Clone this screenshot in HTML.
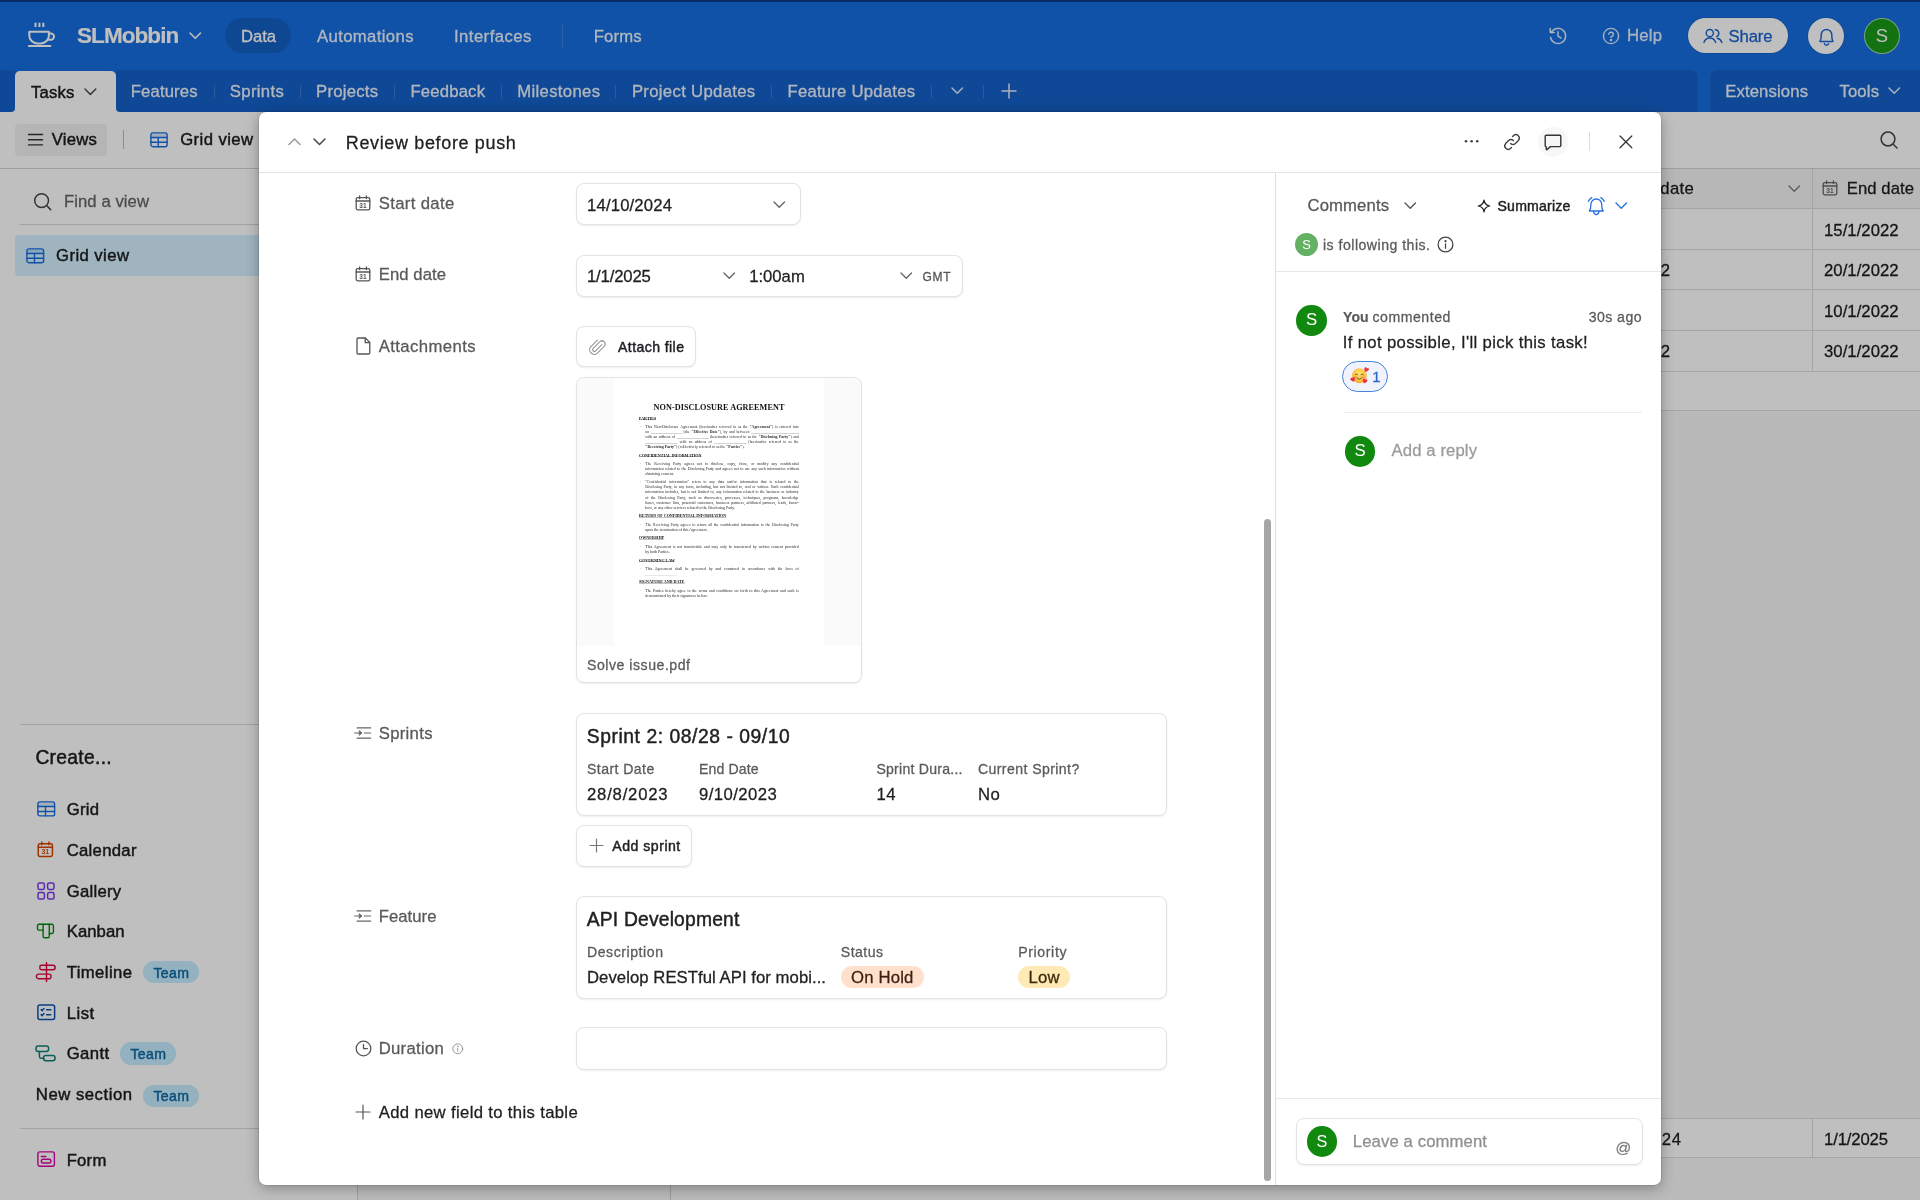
<!DOCTYPE html>
<html lang="en">
<head>
<meta charset="utf-8">
<title>SLMobbin - Tasks</title>
<style>
*{box-sizing:border-box;margin:0;padding:0}
html,body{width:1920px;height:1200px;overflow:hidden}
body{font-family:"Liberation Sans",sans-serif;background:#f7f7f7;color:#1d1f25;position:relative}
svg{display:block;overflow:visible}
.abs{position:absolute}
.layer{position:absolute;left:0;top:0;width:1920px;height:1200px;overflow:hidden;will-change:transform}
.t{position:absolute;white-space:nowrap;line-height:1}
.av{position:absolute;border-radius:50%;text-align:center}
.pt{position:absolute;font-family:"Liberation Serif",serif}
#dim{background:rgba(0,0,0,.25)}
#modalbg{position:absolute;left:259px;top:112px;width:1402px;height:1073px;background:#fff;border-radius:7px;box-shadow:0 0 0 .6px rgba(0,0,0,.16),0 3px 14px rgba(0,0,0,.3)}
</style>
</head>
<body>
<div class="layer" id="base">
<div class="abs" style="left:0px;top:0px;width:1920px;height:112px;background:#166ee1"></div>
<div class="abs" style="left:0px;top:0px;width:1920px;height:1.5px;background:#0d3a8a"></div>
<svg class="abs" style="left:27px;top:21px;" width="30" height="27" viewBox="0 0 30 27" fill="none" stroke="#fff" stroke-width="2" stroke-linecap="round" stroke-linejoin="round"><path d="M2.3 10.8H21.9V14.4A8 8 0 0 1 13.9 22.4H10.3A8 8 0 0 1 2.3 14.4Z"/><path d="M21.9 12.4H23.8A3.2 3.2 0 0 1 23.8 18.8H21.2"/><path d="M1.8 25H23.4"/><path d="M8.5 1.8V6M12.4 1.8V6M16.3 1.8V6" stroke-width="2" stroke-linecap="butt"/></svg>
<svg class="abs" style="left:188.55px;top:32.375px;" width="12.5" height="7.25" viewBox="0 0 12.5 7.25" fill="none" stroke="#fff" stroke-width="1.6" stroke-linecap="round" stroke-linejoin="round"><polyline points="1,1 6.25,6.25 11.5,1"/></svg>
<div class="abs" style="left:225.4px;top:18px;width:65.6px;height:35px;background:rgba(0,0,0,.13);border-radius:18px"></div>
<div class="abs" style="left:562px;top:24px;width:1px;height:23.5px;background:rgba(255,255,255,.14)"></div>
<svg class="abs" style="left:1548px;top:26px;" width="20" height="20" viewBox="0 0 20 20" fill="none" stroke="rgba(255,255,255,.86)" stroke-width="1.5" stroke-linecap="round" stroke-linejoin="round"><path d="M3.4 6.2A7.6 7.6 0 1 1 2.6 11.6"/><path d="M2.2 2.6V6.6H6.2"/><path d="M10 5.8V10.2L13 12"/></svg>
<svg class="abs" style="left:1602px;top:27px;" width="18" height="18" viewBox="0 0 18 18" fill="none" stroke="rgba(255,255,255,.86)" stroke-width="1.4" stroke-linecap="round" stroke-linejoin="round"><circle cx="9" cy="9" r="7.6"/><path d="M6.9 7.2A2.2 2.2 0 1 1 9 9.6V10.6"/><circle cx="9" cy="13.1" r="0.55" fill="#fff"/></svg>
<div class="abs" style="left:1688px;top:18px;width:100px;height:35px;background:#fff;border-radius:18px;box-shadow:0 0 0 1px rgba(0,0,0,.1)"></div>
<svg class="abs" style="left:1702.5px;top:26.7px;" width="20.2" height="17.5" viewBox="0 0 22 19" fill="none" stroke="#1b63cf" stroke-width="1.55" stroke-linecap="round" stroke-linejoin="round"><circle cx="7.4" cy="6.6" r="3.9"/><path d="M1 16.8C2.2 13.4 4.6 12 7.4 12S12.6 13.4 13.8 16.8"/><path d="M13.4 2.9A3.9 3.9 0 0 1 14.8 10.4"/><path d="M15.6 12.2C17.8 12.6 19.6 14 20.6 16.8"/></svg>
<div class="abs" style="left:1808px;top:18px;width:36px;height:36px;background:#fff;border-radius:50%;box-shadow:0 0 0 1px rgba(0,0,0,.1)"></div>
<svg class="abs" style="left:1816.5px;top:26px;" width="19" height="21" viewBox="0 0 19 21" fill="none" stroke="#1b63cf" stroke-width="1.5" stroke-linecap="round" stroke-linejoin="round"><path d="M3 15.4C4.4 13.4 4.2 11.4 4.2 8.8A5.3 5.3 0 0 1 14.8 8.8C14.8 11.4 14.6 13.4 16 15.4Z"/><path d="M7.4 17.6A2.2 2.2 0 0 0 11.6 17.6"/></svg>
<div class="av" style="left:1864.0px;top:18.0px;width:36px;height:36px;line-height:36px;font-size:18.5px;background:#1a9a1a;color:#fff;border:1.5px solid rgba(255,255,255,.6);line-height:33px;">S</div>
<div class="abs" style="left:8px;top:104px;width:116px;height:8px;background:#fff"></div>
<div class="abs" style="left:0px;top:70px;width:15px;height:42px;background:#1461c9;border-radius:0 0 4px 0"></div>
<div class="abs" style="left:116px;top:70px;width:1582px;height:42px;background:#1461c9;border-radius:0 7px 0 4px"></div>
<div class="abs" style="left:1710px;top:70px;width:210px;height:42px;background:#1461c9;border-radius:7px 0 0 0"></div>
<div class="abs" style="left:15px;top:71px;width:101px;height:41px;background:#fff;border-radius:5px 5px 0 0"></div>
<svg class="abs" style="left:83.89999999999999px;top:87.8px;" width="12.8" height="7.4" viewBox="0 0 12.8 7.4" fill="none" stroke="#444" stroke-width="1.4" stroke-linecap="round" stroke-linejoin="round"><polyline points="1,1 6.4,6.4 11.8,1"/></svg>
<div class="abs" style="left:213.5px;top:84.5px;width:1px;height:13.5px;background:rgba(255,255,255,.17)"></div>
<div class="abs" style="left:299.5px;top:84.5px;width:1px;height:13.5px;background:rgba(255,255,255,.17)"></div>
<div class="abs" style="left:393.9px;top:84.5px;width:1px;height:13.5px;background:rgba(255,255,255,.17)"></div>
<div class="abs" style="left:501.2px;top:84.5px;width:1px;height:13.5px;background:rgba(255,255,255,.17)"></div>
<div class="abs" style="left:615.1px;top:84.5px;width:1px;height:13.5px;background:rgba(255,255,255,.17)"></div>
<div class="abs" style="left:771.0px;top:84.5px;width:1px;height:13.5px;background:rgba(255,255,255,.17)"></div>
<div class="abs" style="left:930.5px;top:84.5px;width:1px;height:13.5px;background:rgba(255,255,255,.17)"></div>
<div class="abs" style="left:983.0px;top:84.5px;width:1px;height:13.5px;background:rgba(255,255,255,.17)"></div>
<svg class="abs" style="left:950.75px;top:87.375px;" width="12.5" height="7.25" viewBox="0 0 12.5 7.25" fill="none" stroke="#e4ecfa" stroke-width="1.5" stroke-linecap="round" stroke-linejoin="round"><polyline points="1,1 6.25,6.25 11.5,1"/></svg>
<svg class="abs" style="left:1001.0px;top:83.0px;" width="16" height="16" viewBox="0 0 16 16" fill="none" stroke="#e4ecfa" stroke-width="1.5" stroke-linecap="round" stroke-linejoin="round"><path d="M1 8.0H15M8.0 1V15"/></svg>
<svg class="abs" style="left:1888.15px;top:87.375px;" width="12.5" height="7.25" viewBox="0 0 12.5 7.25" fill="none" stroke="#e4ecfa" stroke-width="1.5" stroke-linecap="round" stroke-linejoin="round"><polyline points="1,1 6.25,6.25 11.5,1"/></svg>
<div class="abs" style="left:0px;top:112px;width:1920px;height:56px;background:#fff"></div>
<div class="abs" style="left:0px;top:167.5px;width:1920px;height:1.2px;background:#d3d3d3"></div>
<div class="abs" style="left:15px;top:123.5px;width:92px;height:32px;background:#f2f2f2;border-radius:4px"></div>
<svg class="abs" style="left:27px;top:132px;" width="18" height="16" viewBox="0 0 18 16" fill="none" stroke="#333" stroke-width="1.4" stroke-linecap="round" stroke-linejoin="round"><path d="M1.5 2.5H15.5M1.5 7.7H15.5M1.5 12.9H15.5"/></svg>
<div class="abs" style="left:123px;top:130px;width:1px;height:19px;background:#bdbdbd"></div>
<svg class="abs" style="left:150.4px;top:131.8px;" width="18" height="15.6" viewBox="0 0 18 15.6" fill="none" stroke="#166ee1" stroke-width="1.4" stroke-linecap="round" stroke-linejoin="round"><rect x="0.9" y="0.9" width="16.2" height="13.799999999999999" rx="2"/><path d="M0.9 5.46H17.1M0.9 10.296H17.1M8.280000000000001 5.46V14.7"/><rect x="1.6" y="1.6" width="14.8" height="3.86" fill="#166ee1" fill-opacity=".16" stroke="none"/></svg>
<svg class="abs" style="left:1879px;top:130px;" width="20" height="20" viewBox="0 0 20 20" fill="none" stroke="#444" stroke-width="1.5" stroke-linecap="round" stroke-linejoin="round"><circle cx="9" cy="9" r="6.9"/><path d="M14.2 14.2L18 18"/></svg>
<div class="abs" style="left:0px;top:169px;width:357px;height:1031px;background:#fff"></div>
<div class="abs" style="left:357px;top:169px;width:1px;height:1031px;background:#d4d4d4"></div>
<svg class="abs" style="left:33px;top:192px;" width="20" height="20" viewBox="0 0 20 20" fill="none" stroke="#444" stroke-width="1.5" stroke-linecap="round" stroke-linejoin="round"><circle cx="8.6" cy="8.6" r="6.9"/><path d="M13.8 13.8L17.6 17.6"/></svg>
<div class="abs" style="left:20px;top:224px;width:320px;height:1.2px;background:#d9d9d9"></div>
<div class="abs" style="left:15px;top:235.3px;width:330px;height:40.6px;background:#d5f1ff;border-radius:4px"></div>
<svg class="abs" style="left:26px;top:247.8px;" width="18.5" height="15.6" viewBox="0 0 18.5 15.6" fill="none" stroke="#166ee1" stroke-width="1.4" stroke-linecap="round" stroke-linejoin="round"><rect x="0.9" y="0.9" width="16.7" height="13.799999999999999" rx="2"/><path d="M0.9 5.46H17.6M0.9 10.296H17.6M8.51 5.46V14.7"/><rect x="1.6" y="1.6" width="15.3" height="3.86" fill="#166ee1" fill-opacity=".16" stroke="none"/></svg>
<div class="abs" style="left:20px;top:723.6px;width:320px;height:1.2px;background:#dadada"></div>
<div class="abs" style="left:143px;top:960.9px;width:56px;height:22.5px;background:#c4ecff;border-radius:12px"></div>
<div class="abs" style="left:120px;top:1042.3px;width:56px;height:22.5px;background:#c4ecff;border-radius:12px"></div>
<div class="abs" style="left:143px;top:1084.5px;width:56px;height:22.5px;background:#c4ecff;border-radius:12px"></div>
<div class="abs" style="left:20px;top:1127.6px;width:320px;height:1.2px;background:#dadada"></div>
<svg class="abs" style="left:36.5px;top:801px;" width="18.5" height="15.8" viewBox="0 0 18.5 15.8" fill="none" stroke="#166ee1" stroke-width="1.4" stroke-linecap="round" stroke-linejoin="round"><rect x="0.9" y="0.9" width="16.7" height="14.0" rx="2"/><path d="M0.9 5.53H17.6M0.9 10.428H17.6M8.51 5.53V14.9"/><rect x="1.6" y="1.6" width="15.3" height="3.93" fill="#166ee1" fill-opacity=".16" stroke="none"/></svg>
<svg class="abs" style="left:37px;top:840.5px;" width="16.7" height="16.7" viewBox="0 0 16 16" fill="none" stroke="#d54401" stroke-width="1.437125748502994" stroke-linecap="round" stroke-linejoin="round"><rect x="1.2" y="2.6" width="13.6" height="12.2" rx="1.6"/><path d="M1.2 6H14.8M4.6 0.9V3.6M11.4 0.9V3.6"/><text x="8" y="12.9" font-family='"Liberation Sans",sans-serif' font-size="6.6" font-weight="700" text-anchor="middle" fill="#d54401" stroke="none">31</text></svg>
<svg class="abs" style="left:36.5px;top:881.5px;" width="18" height="18" viewBox="0 0 18 18" fill="none" stroke="#7c37ef" stroke-width="1.5" stroke-linecap="round" stroke-linejoin="round"><rect x="1" y="1" width="6.4" height="6.4" rx="1.6"/><rect x="10.6" y="1" width="6.4" height="6.4" rx="1.6"/><rect x="1" y="10.6" width="6.4" height="6.4" rx="1.6"/><rect x="10.6" y="10.6" width="6.4" height="6.4" rx="1.6"/></svg>
<svg class="abs" style="left:36px;top:922.5px;" width="19" height="17" viewBox="0 0 19 17" fill="none" stroke="#048a0e" stroke-width="1.4" stroke-linecap="round" stroke-linejoin="round"><path d="M3 1.3H15.9A1.5 1.5 0 0 1 17.4 2.8V9A1.5 1.5 0 0 1 15.9 10.5H13.3V13.3A1.5 1.5 0 0 1 11.8 14.8H8.6A1.5 1.5 0 0 1 7.1 13.3V7.1H3A1.5 1.5 0 0 1 1.5 5.6V2.8A1.5 1.5 0 0 1 3 1.3Z"/><path d="M7.1 1.3V7.1M13.3 1.3V10.5"/></svg>
<svg class="abs" style="left:35px;top:961.5px;" width="21" height="21" viewBox="0 0 21 21" fill="none" stroke="#dc043b" stroke-width="1.4" stroke-linecap="round" stroke-linejoin="round"><path d="M11.5 0.6V19.6"/><path d="M6.3 3.3H18A2.2 2.2 0 0 1 18 7.7H6.3A1.4 1.4 0 0 1 4.9 6.3V4.7A1.4 1.4 0 0 1 6.3 3.3Z"/><path d="M3.7 12.1H14.5A1.4 1.4 0 0 1 15.9 13.5V15.3A1.4 1.4 0 0 1 14.5 16.7H3.7A2.3 2.3 0 0 1 3.7 12.1Z"/></svg>
<svg class="abs" style="left:36.5px;top:1003.8px;" width="18.5" height="16.5" viewBox="0 0 18.5 16.5" fill="none" stroke="#0d52ac" stroke-width="1.5" stroke-linecap="round" stroke-linejoin="round"><rect x="0.9" y="0.9" width="16.7" height="14.7" rx="2"/><path d="M4.2 5.6L5.2 6.6L7 4.6M4.2 10.6L5.2 11.6L7 9.6M9.6 5.8H13.8M9.6 10.8H13.8"/></svg>
<svg class="abs" style="left:35px;top:1045px;" width="21" height="17" viewBox="0 0 21 17" fill="none" stroke="#0d7f78" stroke-width="1.5" stroke-linecap="round" stroke-linejoin="round"><rect x="1" y="1" width="12.6" height="5.4" rx="2.2"/><rect x="8.6" y="10.4" width="11.4" height="5.4" rx="2.2"/><path d="M4.4 6.4V11.6A1.6 1.6 0 0 0 6 13.2H8.6"/></svg>
<svg class="abs" style="left:36.5px;top:1151.3px;" width="18.5" height="16.5" viewBox="0 0 18.5 16.5" fill="none" stroke="#dd04a8" stroke-width="1.4" stroke-linecap="round" stroke-linejoin="round"><rect x="0.9" y="0.9" width="16.5" height="14.4" rx="2"/><path d="M4.3 5.5H8.8"/><rect x="4.3" y="8.3" width="9.6" height="3.7" rx="1.8"/></svg>
<div class="abs" style="left:358px;top:169px;width:1562px;height:1031px;background:#f7f7f7"></div>
<div class="abs" style="left:358px;top:169px;width:1562px;height:39.5px;background:#f5f5f5"></div>
<div class="abs" style="left:358px;top:208.5px;width:1562px;height:162.5px;background:#ffffff"></div>
<div class="abs" style="left:358px;top:371px;width:1562px;height:39.5px;background:#ffffff"></div>
<div class="abs" style="left:358px;top:208.2px;width:1562px;height:1.2px;background:#dddddd"></div>
<div class="abs" style="left:358px;top:248.8px;width:1562px;height:1.2px;background:#dddddd"></div>
<div class="abs" style="left:358px;top:289.3px;width:1562px;height:1.2px;background:#dddddd"></div>
<div class="abs" style="left:358px;top:329.9px;width:1562px;height:1.2px;background:#dddddd"></div>
<div class="abs" style="left:358px;top:370.5px;width:1562px;height:1.2px;background:#dddddd"></div>
<div class="abs" style="left:358px;top:409.8px;width:1562px;height:1.3px;background:#dcdcdc"></div>
<div class="abs" style="left:1812px;top:169px;width:1px;height:202px;background:#dcdcdc"></div>
<div class="abs" style="left:670px;top:169px;width:1px;height:1031px;background:#d0d0d0"></div>
<svg class="abs" style="left:1787.75px;top:184.975px;" width="12.5" height="7.25" viewBox="0 0 12.5 7.25" fill="none" stroke="#777" stroke-width="1.3" stroke-linecap="round" stroke-linejoin="round"><polyline points="1,1 6.25,6.25 11.5,1"/></svg>
<svg class="abs" style="left:1821.5px;top:180px;" width="16" height="16" viewBox="0 0 16 16" fill="none" stroke="#666" stroke-width="1.3" stroke-linecap="round" stroke-linejoin="round"><rect x="1.2" y="2.6" width="13.6" height="12.2" rx="1.6"/><path d="M1.2 6H14.8M4.6 0.9V3.6M11.4 0.9V3.6"/><text x="8" y="12.9" font-family='"Liberation Sans",sans-serif' font-size="6.6" font-weight="700" text-anchor="middle" fill="#666" stroke="none">31</text></svg>
<div class="abs" style="left:358px;top:1118.6px;width:1562px;height:39px;background:#ffffff"></div>
<div class="abs" style="left:358px;top:1158px;width:1562px;height:42px;background:#f9f9f9"></div>
<div class="abs" style="left:358px;top:1117.6px;width:1562px;height:1.4px;background:#dcdcdc"></div>
<div class="abs" style="left:358px;top:1156.8px;width:1562px;height:1.4px;background:#dcdcdc"></div>
<div class="abs" style="left:1812px;top:1119px;width:1px;height:38.5px;background:#dcdcdc"></div>
<div class="abs" style="left:670px;top:1158px;width:1px;height:42px;background:#d0d0d0"></div>
<div class="t" style="left:77.00px;top:24.85px;font-size:22.5px;color:#fff;font-weight:700;-webkit-text-stroke:0.15px;letter-spacing:-0.933px;">SLMobbin</div>
<div class="t" style="left:241.00px;top:28.56px;font-size:16.7px;color:#fff;-webkit-text-stroke:0.28px;letter-spacing:-0.083px;">Data</div>
<div class="t" style="left:317.00px;top:28.56px;font-size:16.7px;color:rgba(255,255,255,.9);-webkit-text-stroke:0.28px;letter-spacing:0.373px;">Automations</div>
<div class="t" style="left:454.00px;top:28.56px;font-size:16.7px;color:rgba(255,255,255,.9);-webkit-text-stroke:0.28px;letter-spacing:0.447px;">Interfaces</div>
<div class="t" style="left:593.75px;top:28.56px;font-size:16.7px;color:rgba(255,255,255,.9);-webkit-text-stroke:0.28px;letter-spacing:0.167px;">Forms</div>
<div class="t" style="left:1627.00px;top:28.36px;font-size:16.7px;color:rgba(255,255,255,.86);-webkit-text-stroke:0.28px;letter-spacing:0.224px;">Help</div>
<div class="t" style="left:1728.50px;top:28.56px;font-size:16.7px;color:#1b63cf;-webkit-text-stroke:0.28px;letter-spacing:-0.133px;">Share</div>
<div class="t" style="left:31.00px;top:84.56px;font-size:16.7px;color:#1b1c1f;-webkit-text-stroke:0.45px;letter-spacing:0.186px;">Tasks</div>
<div class="t" style="left:130.80px;top:83.96px;font-size:16.7px;color:#edf3fc;-webkit-text-stroke:0.28px;letter-spacing:0.120px;">Features</div>
<div class="t" style="left:229.80px;top:83.96px;font-size:16.7px;color:#edf3fc;-webkit-text-stroke:0.28px;letter-spacing:0.335px;">Sprints</div>
<div class="t" style="left:316.00px;top:83.96px;font-size:16.7px;color:#edf3fc;-webkit-text-stroke:0.28px;letter-spacing:0.246px;">Projects</div>
<div class="t" style="left:410.40px;top:83.96px;font-size:16.7px;color:#edf3fc;-webkit-text-stroke:0.28px;letter-spacing:0.186px;">Feedback</div>
<div class="t" style="left:517.30px;top:83.96px;font-size:16.7px;color:#edf3fc;-webkit-text-stroke:0.28px;letter-spacing:0.326px;">Milestones</div>
<div class="t" style="left:631.90px;top:83.96px;font-size:16.7px;color:#edf3fc;-webkit-text-stroke:0.28px;letter-spacing:0.326px;">Project Updates</div>
<div class="t" style="left:787.50px;top:83.96px;font-size:16.7px;color:#edf3fc;-webkit-text-stroke:0.28px;letter-spacing:0.228px;">Feature Updates</div>
<div class="t" style="left:1725.20px;top:83.96px;font-size:16.7px;color:#edf3fc;-webkit-text-stroke:0.28px;letter-spacing:0.129px;">Extensions</div>
<div class="t" style="left:1839.40px;top:83.96px;font-size:16.7px;color:#edf3fc;-webkit-text-stroke:0.28px;letter-spacing:0.158px;">Tools</div>
<div class="t" style="left:51.70px;top:132.36px;font-size:16.7px;color:#1b1c1f;-webkit-text-stroke:0.45px;letter-spacing:0.245px;">Views</div>
<div class="t" style="left:180.20px;top:132.36px;font-size:16.7px;color:#1b1c1f;-webkit-text-stroke:0.45px;letter-spacing:0.407px;">Grid view</div>
<div class="t" style="left:64.00px;top:193.86px;font-size:16.7px;color:#666666;-webkit-text-stroke:0.28px;letter-spacing:0.059px;">Find a view</div>
<div class="t" style="left:56.00px;top:247.96px;font-size:16.7px;color:#1b1c1f;-webkit-text-stroke:0.45px;letter-spacing:0.432px;">Grid view</div>
<div class="t" style="left:35.40px;top:747.76px;font-size:19.3px;color:#1b1c1f;-webkit-text-stroke:0.45px;letter-spacing:0.293px;">Create...</div>
<div class="t" style="left:66.70px;top:802.16px;font-size:16.7px;color:#1b1c1f;-webkit-text-stroke:0.45px;letter-spacing:0.256px;">Grid</div>
<div class="t" style="left:66.70px;top:842.96px;font-size:16.7px;color:#1b1c1f;-webkit-text-stroke:0.45px;letter-spacing:0.295px;">Calendar</div>
<div class="t" style="left:66.70px;top:883.66px;font-size:16.7px;color:#1b1c1f;-webkit-text-stroke:0.45px;letter-spacing:0.273px;">Gallery</div>
<div class="t" style="left:66.70px;top:924.36px;font-size:16.7px;color:#1b1c1f;-webkit-text-stroke:0.45px;letter-spacing:0.071px;">Kanban</div>
<div class="t" style="left:66.70px;top:965.06px;font-size:16.7px;color:#1b1c1f;-webkit-text-stroke:0.45px;letter-spacing:0.407px;">Timeline</div>
<div class="t" style="left:153.40px;top:965.66px;font-size:14.1px;color:#0f68a2;-webkit-text-stroke:0.45px;letter-spacing:0.377px;">Team</div>
<div class="t" style="left:66.70px;top:1005.76px;font-size:16.7px;color:#1b1c1f;-webkit-text-stroke:0.45px;letter-spacing:0.510px;">List</div>
<div class="t" style="left:66.70px;top:1046.46px;font-size:16.7px;color:#1b1c1f;-webkit-text-stroke:0.45px;letter-spacing:0.418px;">Gantt</div>
<div class="t" style="left:130.40px;top:1047.06px;font-size:14.1px;color:#0f68a2;-webkit-text-stroke:0.45px;letter-spacing:0.377px;">Team</div>
<div class="t" style="left:66.70px;top:1153.16px;font-size:16.7px;color:#1b1c1f;-webkit-text-stroke:0.45px;letter-spacing:0.221px;">Form</div>
<div class="t" style="left:35.80px;top:1086.56px;font-size:16.7px;color:#1b1c1f;-webkit-text-stroke:0.45px;letter-spacing:0.529px;">New section</div>
<div class="t" style="left:153.40px;top:1089.16px;font-size:14.1px;color:#0f68a2;-webkit-text-stroke:0.45px;letter-spacing:0.377px;">Team</div>
<div class="t" style="left:1618.30px;top:181.46px;font-size:16.7px;color:#1b1c1f;-webkit-text-stroke:0.28px;letter-spacing:0.349px;">Start date</div>
<div class="t" style="left:1846.80px;top:181.46px;font-size:16.7px;color:#1b1c1f;-webkit-text-stroke:0.28px;letter-spacing:0.055px;">End date</div>
<div class="t" style="left:1824.00px;top:222.66px;font-size:16.7px;color:#1b1c1f;-webkit-text-stroke:0.28px;letter-spacing:0.044px;">15/1/2022</div>
<div class="t" style="left:1824.00px;top:263.26px;font-size:16.7px;color:#1b1c1f;-webkit-text-stroke:0.28px;letter-spacing:0.044px;">20/1/2022</div>
<div class="t" style="left:1824.00px;top:303.86px;font-size:16.7px;color:#1b1c1f;-webkit-text-stroke:0.28px;letter-spacing:0.044px;">10/1/2022</div>
<div class="t" style="left:1824.00px;top:344.46px;font-size:16.7px;color:#1b1c1f;-webkit-text-stroke:0.28px;letter-spacing:0.044px;">30/1/2022</div>
<div class="t" style="left:1660.80px;top:263.26px;font-size:16.7px;color:#1b1c1f;-webkit-text-stroke:0.28px;letter-spacing:0.585px;">2</div>
<div class="t" style="left:1660.80px;top:344.46px;font-size:16.7px;color:#1b1c1f;-webkit-text-stroke:0.28px;letter-spacing:0.585px;">2</div>
<div class="t" style="left:1592.00px;top:1132.06px;font-size:16.7px;color:#1b1c1f;-webkit-text-stroke:0.28px;letter-spacing:0.600px;">14/10/2024</div>
<div class="t" style="left:1824.00px;top:1132.06px;font-size:16.7px;color:#1b1c1f;-webkit-text-stroke:0.28px;letter-spacing:-0.138px;">1/1/2025</div>
</div>
<div class="layer" id="dim"></div>
<div class="layer" id="modal">
<div id="modalbg"></div>
<svg class="abs" style="left:287.9px;top:137.85px;" width="13" height="7.5" viewBox="0 0 13 7.5" fill="none" stroke="#9a9a9a" stroke-width="1.5" stroke-linecap="round" stroke-linejoin="round"><polyline points="1,6.5 6.5,1 12,6.5"/></svg>
<svg class="abs" style="left:313.3px;top:138.15px;" width="13" height="7.5" viewBox="0 0 13 7.5" fill="none" stroke="#444" stroke-width="1.5" stroke-linecap="round" stroke-linejoin="round"><polyline points="1,1 6.5,6.5 12,1"/></svg>
<svg class="abs" style="left:1464.3px;top:138.6px;" width="16" height="5" viewBox="0 0 16 5" fill="#444" stroke="none" stroke-width="1.5" stroke-linecap="round" stroke-linejoin="round"><circle cx="2" cy="2.3" r="1.3"/><circle cx="7.6" cy="2.3" r="1.3"/><circle cx="13.2" cy="2.3" r="1.3"/></svg>
<svg class="abs" style="left:1503px;top:132.5px;" width="18" height="18" viewBox="0 0 18 18" fill="none" stroke="#444" stroke-width="1.4" stroke-linecap="round" stroke-linejoin="round"><path d="M7.6 10.4A3.4 3.4 0 0 0 12.4 10.4L15.4 7.4A3.4 3.4 0 0 0 10.6 2.6L9.6 3.6"/><path d="M10.4 7.6A3.4 3.4 0 0 0 5.6 7.6L2.6 10.6A3.4 3.4 0 0 0 7.4 15.4L8.4 14.4"/></svg>
<div class="abs" style="left:1538px;top:127px;width:30px;height:30px;background:#f7f7f7;border-radius:50%"></div>
<svg class="abs" style="left:1544px;top:134px;" width="18" height="17" viewBox="0 0 18 17" fill="none" stroke="#333" stroke-width="1.4" stroke-linecap="round" stroke-linejoin="round"><path d="M2.2 1.2H15.8A1 1 0 0 1 16.8 2.2V11.6A1 1 0 0 1 15.8 12.6H6.4L2.9 15.6A0.4 0.4 0 0 1 2.2 15.3V12.6A1 1 0 0 1 1.2 11.6V2.2A1 1 0 0 1 2.2 1.2Z"/></svg>
<div class="abs" style="left:1589px;top:132px;width:1px;height:18.5px;background:#dcdcdc"></div>
<svg class="abs" style="left:1618.6px;top:134.6px;" width="14" height="14" viewBox="0 0 14 14" fill="none" stroke="#333" stroke-width="1.25" stroke-linecap="round" stroke-linejoin="round"><path d="M1 1L12.8 12.8M12.8 1L1 12.8"/></svg>
<div class="abs" style="left:259px;top:171.5px;width:1402px;height:1.3px;background:#e3e3e3"></div>
<div class="abs" style="left:1275px;top:172px;width:1.2px;height:1013px;background:#dedede"></div>
<div class="abs" style="left:1264px;top:519px;width:7px;height:661.5px;background:#a6a6a6;border-radius:4px"></div>
<svg class="abs" style="left:355px;top:195px;" width="16" height="16" viewBox="0 0 16 16" fill="none" stroke="#555" stroke-width="1.3" stroke-linecap="round" stroke-linejoin="round"><rect x="1.2" y="2.6" width="13.6" height="12.2" rx="1.6"/><path d="M1.2 6H14.8M4.6 0.9V3.6M11.4 0.9V3.6"/><text x="8" y="12.9" font-family='"Liberation Sans",sans-serif' font-size="6.6" font-weight="700" text-anchor="middle" fill="#555" stroke="none">31</text></svg>
<div class="abs" style="left:575.7px;top:183.3px;width:225.2px;height:42.2px;background:#fff;border:1.5px solid #e3e3e3;border-radius:8px;box-shadow:0 1px 2px rgba(0,0,0,.07);"></div>
<svg class="abs" style="left:773.15px;top:200.975px;" width="12.5" height="7.25" viewBox="0 0 12.5 7.25" fill="none" stroke="#666" stroke-width="1.4" stroke-linecap="round" stroke-linejoin="round"><polyline points="1,1 6.25,6.25 11.5,1"/></svg>
<svg class="abs" style="left:355px;top:266px;" width="16" height="16" viewBox="0 0 16 16" fill="none" stroke="#555" stroke-width="1.3" stroke-linecap="round" stroke-linejoin="round"><rect x="1.2" y="2.6" width="13.6" height="12.2" rx="1.6"/><path d="M1.2 6H14.8M4.6 0.9V3.6M11.4 0.9V3.6"/><text x="8" y="12.9" font-family='"Liberation Sans",sans-serif' font-size="6.6" font-weight="700" text-anchor="middle" fill="#555" stroke="none">31</text></svg>
<div class="abs" style="left:575.7px;top:254.5px;width:387.3px;height:42.1px;background:#fff;border:1.5px solid #e3e3e3;border-radius:8px;box-shadow:0 1px 2px rgba(0,0,0,.07);"></div>
<svg class="abs" style="left:722.55px;top:272.075px;" width="12.5" height="7.25" viewBox="0 0 12.5 7.25" fill="none" stroke="#666" stroke-width="1.4" stroke-linecap="round" stroke-linejoin="round"><polyline points="1,1 6.25,6.25 11.5,1"/></svg>
<svg class="abs" style="left:900.25px;top:272.075px;" width="12.5" height="7.25" viewBox="0 0 12.5 7.25" fill="none" stroke="#666" stroke-width="1.4" stroke-linecap="round" stroke-linejoin="round"><polyline points="1,1 6.25,6.25 11.5,1"/></svg>
<svg class="abs" style="left:355.5px;top:337px;" width="15" height="18" viewBox="0 0 15 18" fill="none" stroke="#555" stroke-width="1.3" stroke-linecap="round" stroke-linejoin="round"><path d="M2.2 1H9.4L13.8 5.4V15.8A1.2 1.2 0 0 1 12.6 17H2.2A1.2 1.2 0 0 1 1 15.8V2.2A1.2 1.2 0 0 1 2.2 1Z"/><path d="M9.2 1.2V5.6H13.6"/></svg>
<div class="abs" style="left:575.7px;top:325.6px;width:120.3px;height:41.7px;background:#fff;border:1.5px solid #e3e3e3;border-radius:8px;box-shadow:0 1px 2px rgba(0,0,0,.07);"></div>
<svg class="abs" style="left:587.5px;top:337.5px;" width="18" height="18" viewBox="0 0 18 18" fill="none" stroke="#9a9a9a" stroke-width="1.2" stroke-linecap="round" stroke-linejoin="round"><path d="M13.9 6.6L7.7 12.8A1.75 1.75 0 0 1 5.2 10.3L11.9 3.6A3.2 3.2 0 0 1 16.4 8.1L9.4 15.1A4.6 4.6 0 0 1 2.9 8.6L9.4 2.1"/></svg>
<div class="abs" style="left:575.7px;top:376.5px;width:286.3px;height:306.7px;background:#fff;border:1.5px solid #e3e3e3;border-radius:8px;box-shadow:0 1px 2px rgba(0,0,0,.07);overflow:hidden"><div class="abs" style="left:0;top:0;width:284px;height:268.5px;background:#fafafa"></div><div class="abs" style="left:37.2px;top:0;width:210.6px;height:268.5px;background:#fff"></div></div>
<svg class="abs" style="left:354px;top:726.6px;" width="17.5" height="12" viewBox="0 0 17.5 12" fill="none" stroke="#666" stroke-width="1.15" stroke-linecap="round" stroke-linejoin="round"><path d="M3.1 0.9H16.7M10.2 6H16.7M3.1 11.05H16.7M0.6 6H7"/><path d="M5.5 3.9L8 6L5.5 8.1Z" fill="#666" stroke-width="0.9"/></svg>
<div class="abs" style="left:575.7px;top:712.6px;width:591.2px;height:103.7px;background:#fff;border:1.5px solid #e3e3e3;border-radius:8px;box-shadow:0 1px 2px rgba(0,0,0,.07);"></div>
<div class="abs" style="left:575.7px;top:824.8px;width:116.2px;height:42.0px;background:#fff;border:1.5px solid #e3e3e3;border-radius:8px;box-shadow:0 1px 2px rgba(0,0,0,.07);"></div>
<svg class="abs" style="left:588.8px;top:838.2px;" width="15" height="15" viewBox="0 0 15 15" fill="none" stroke="#777" stroke-width="1.2" stroke-linecap="round" stroke-linejoin="round"><path d="M1 7.5H14M7.5 1V14"/></svg>
<svg class="abs" style="left:354px;top:909.6px;" width="17.5" height="12" viewBox="0 0 17.5 12" fill="none" stroke="#666" stroke-width="1.15" stroke-linecap="round" stroke-linejoin="round"><path d="M3.1 0.9H16.7M10.2 6H16.7M3.1 11.05H16.7M0.6 6H7"/><path d="M5.5 3.9L8 6L5.5 8.1Z" fill="#666" stroke-width="0.9"/></svg>
<div class="abs" style="left:575.7px;top:896px;width:591.2px;height:102.6px;background:#fff;border:1.5px solid #e3e3e3;border-radius:8px;box-shadow:0 1px 2px rgba(0,0,0,.07);"></div>
<div class="abs" style="left:840.8px;top:965.8px;width:83px;height:22.4px;background:#ffe0cc;border-radius:12px"></div>
<div class="abs" style="left:1018.2px;top:965.8px;width:51.6px;height:22.4px;background:#ffeab6;border-radius:12px"></div>
<svg class="abs" style="left:354.5px;top:1039.5px;" width="17" height="17" viewBox="0 0 17 17" fill="none" stroke="#555" stroke-width="1.3" stroke-linecap="round" stroke-linejoin="round"><circle cx="8.5" cy="8.5" r="7.3"/><path d="M8.5 4.4V8.6H12.4"/></svg>
<svg class="abs" style="left:451.5px;top:1043px;" width="11.5" height="11.5" viewBox="0 0 11.5 11.5" fill="none" stroke="#8a8a8a" stroke-width="0.9" stroke-linecap="round" stroke-linejoin="round"><circle cx="5.75" cy="5.75" r="4.9"/><path d="M5.75 5.3V8.2"/><circle cx="5.75" cy="3.5" r="0.3"/></svg>
<div class="abs" style="left:575.7px;top:1027.2px;width:591.2px;height:42.6px;background:#fff;border:1.5px solid #e3e3e3;border-radius:8px;box-shadow:0 1px 2px rgba(0,0,0,.07);"></div>
<svg class="abs" style="left:354.5px;top:1104.4px;" width="16" height="16" viewBox="0 0 16 16" fill="none" stroke="#555" stroke-width="1.2" stroke-linecap="round" stroke-linejoin="round"><path d="M1 8.0H15M8.0 1V15"/></svg>
<svg class="abs" style="left:1403.75px;top:202.175px;" width="12.5" height="7.25" viewBox="0 0 12.5 7.25" fill="none" stroke="#555" stroke-width="1.4" stroke-linecap="round" stroke-linejoin="round"><polyline points="1,1 6.25,6.25 11.5,1"/></svg>
<svg class="abs" style="left:1477px;top:198.5px;" width="14" height="14" viewBox="0 0 14 14" fill="none" stroke="#222" stroke-width="1.25" stroke-linecap="round" stroke-linejoin="round"><path d="M7 1.2C7.5 4.6 9.4 6.5 12.8 7C9.4 7.5 7.5 9.4 7 12.8C6.5 9.4 4.6 7.5 1.2 7C4.6 6.5 6.5 4.6 7 1.2Z"/></svg>
<svg class="abs" style="left:1586px;top:195.5px;" width="20" height="20" viewBox="0 0 20 20" fill="none" stroke="#2a72de" stroke-width="1.3" stroke-linecap="round" stroke-linejoin="round"><path d="M3.4 15C4.6 13.4 4.9 11 4.9 8.4A5.4 5.4 0 0 1 15.7 8.4C15.7 11 16 13.4 17.2 15Z"/><path d="M7.6 15.4C7.9 17.6 9 18.6 10.3 18.6S12.7 17.6 13 15.4"/><path d="M2.4 5.3Q3.4 2.9 5.8 1.6M14.8 1.6Q17.2 2.9 18.2 5.3"/></svg>
<svg class="abs" style="left:1615.25px;top:202.075px;" width="12.5" height="7.25" viewBox="0 0 12.5 7.25" fill="none" stroke="#2a72de" stroke-width="1.4" stroke-linecap="round" stroke-linejoin="round"><polyline points="1,1 6.25,6.25 11.5,1"/></svg>
<div class="av" style="left:1295.0px;top:232.9px;width:23px;height:23px;line-height:23px;font-size:13px;background:#65b164;color:#fff;">S</div>
<svg class="abs" style="left:1437px;top:236px;" width="17" height="17" viewBox="0 0 17 17" fill="none" stroke="#444" stroke-width="1.25" stroke-linecap="round" stroke-linejoin="round"><circle cx="8.5" cy="8.5" r="7.4"/><path d="M8.5 7.8V12.2"/><circle cx="8.5" cy="5.2" r="0.5" fill="#444"/></svg>
<div class="abs" style="left:1276px;top:270.8px;width:385px;height:1.2px;background:#e6e6e6"></div>
<div class="av" style="left:1296.45px;top:305.25px;width:30.5px;height:30.5px;line-height:30.5px;font-size:16.8px;background:#11890f;color:#fff;">S</div>
<div class="abs" style="left:1342.2px;top:361.2px;width:45.8px;height:30.5px;background:#f0f3fd;border:1.7px solid #4583e0;border-radius:15.5px"></div>
<div class="abs" style="left:1343.5px;top:412px;width:298px;height:1.1px;background:#ececec"></div>
<div class="av" style="left:1344.75px;top:436.25px;width:30.5px;height:30.5px;line-height:30.5px;font-size:16.8px;background:#11890f;color:#fff;">S</div>
<div class="abs" style="left:1276px;top:1097.7px;width:385px;height:1.2px;background:#e6e6e6"></div>
<div class="abs" style="left:1295.7px;top:1118.3px;width:347.3px;height:47.1px;background:#fff;border:1.5px solid #e3e3e3;border-radius:8px;box-shadow:0 1px 2px rgba(0,0,0,.07);"></div>
<div class="av" style="left:1306.65px;top:1126.35px;width:30.5px;height:30.5px;line-height:30.5px;font-size:16.2px;background:#11890f;color:#fff;">S</div>
<div class="t" style="left:345.80px;top:133.66px;font-size:18px;color:#1e1f22;-webkit-text-stroke:0.28px;letter-spacing:0.642px;">Review before push</div>
<div class="t" style="left:378.70px;top:196.46px;font-size:16.7px;color:#595a5c;-webkit-text-stroke:0.28px;letter-spacing:0.349px;">Start date</div>
<div class="t" style="left:587.00px;top:197.76px;font-size:16.7px;color:#1e1f22;-webkit-text-stroke:0.28px;letter-spacing:0.163px;">14/10/2024</div>
<div class="t" style="left:378.70px;top:267.36px;font-size:16.7px;color:#595a5c;-webkit-text-stroke:0.28px;letter-spacing:0.070px;">End date</div>
<div class="t" style="left:587.00px;top:268.86px;font-size:16.7px;color:#1e1f22;-webkit-text-stroke:0.28px;letter-spacing:-0.167px;">1/1/2025</div>
<div class="t" style="left:749.20px;top:268.86px;font-size:16.7px;color:#1e1f22;-webkit-text-stroke:0.28px;letter-spacing:-0.014px;">1:00am</div>
<div class="t" style="left:922.50px;top:270.74px;font-size:12px;color:#555;-webkit-text-stroke:0.28px;letter-spacing:0.714px;">GMT</div>
<div class="t" style="left:378.70px;top:338.56px;font-size:16.7px;color:#595a5c;-webkit-text-stroke:0.28px;letter-spacing:0.413px;">Attachments</div>
<div class="t" style="left:618.00px;top:340.06px;font-size:14.1px;color:#1e1f22;-webkit-text-stroke:0.45px;letter-spacing:0.411px;">Attach file</div>
<div class="t" style="left:587.00px;top:657.76px;font-size:14.1px;color:#595a5c;-webkit-text-stroke:0.28px;letter-spacing:0.529px;">Solve issue.pdf</div>
<div class="t" style="left:378.70px;top:726.36px;font-size:16.7px;color:#595a5c;-webkit-text-stroke:0.28px;letter-spacing:0.310px;">Sprints</div>
<div class="t" style="left:586.80px;top:727.16px;font-size:19.3px;color:#1e1f22;-webkit-text-stroke:0.45px;letter-spacing:0.554px;">Sprint 2: 08/28 - 09/10</div>
<div class="t" style="left:587.00px;top:761.96px;font-size:14.1px;color:#595a5c;-webkit-text-stroke:0.28px;letter-spacing:0.427px;">Start Date</div>
<div class="t" style="left:698.90px;top:761.96px;font-size:14.1px;color:#595a5c;-webkit-text-stroke:0.28px;letter-spacing:0.133px;">End Date</div>
<div class="t" style="left:876.40px;top:761.96px;font-size:14.1px;color:#595a5c;-webkit-text-stroke:0.28px;letter-spacing:0.236px;">Sprint Dura...</div>
<div class="t" style="left:977.90px;top:761.96px;font-size:14.1px;color:#595a5c;-webkit-text-stroke:0.28px;letter-spacing:0.416px;">Current Sprint?</div>
<div class="t" style="left:587.00px;top:786.76px;font-size:16.7px;color:#1e1f22;-webkit-text-stroke:0.28px;letter-spacing:0.794px;">28/8/2023</div>
<div class="t" style="left:698.90px;top:786.76px;font-size:16.7px;color:#1e1f22;-webkit-text-stroke:0.28px;letter-spacing:0.456px;">9/10/2023</div>
<div class="t" style="left:876.40px;top:786.76px;font-size:16.7px;color:#1e1f22;-webkit-text-stroke:0.28px;letter-spacing:0.585px;">14</div>
<div class="t" style="left:977.90px;top:786.76px;font-size:16.7px;color:#1e1f22;-webkit-text-stroke:0.28px;letter-spacing:0.585px;">No</div>
<div class="t" style="left:612.30px;top:839.06px;font-size:14.1px;color:#1e1f22;-webkit-text-stroke:0.45px;letter-spacing:0.503px;">Add sprint</div>
<div class="t" style="left:378.70px;top:909.36px;font-size:16.7px;color:#595a5c;-webkit-text-stroke:0.28px;letter-spacing:0.047px;">Feature</div>
<div class="t" style="left:586.80px;top:910.36px;font-size:19.3px;color:#1e1f22;-webkit-text-stroke:0.45px;letter-spacing:0.175px;">API Development</div>
<div class="t" style="left:587.00px;top:944.56px;font-size:14.1px;color:#595a5c;-webkit-text-stroke:0.28px;letter-spacing:0.550px;">Description</div>
<div class="t" style="left:840.80px;top:944.56px;font-size:14.1px;color:#595a5c;-webkit-text-stroke:0.28px;letter-spacing:0.446px;">Status</div>
<div class="t" style="left:1018.20px;top:944.56px;font-size:14.1px;color:#595a5c;-webkit-text-stroke:0.28px;letter-spacing:0.634px;">Priority</div>
<div class="t" style="left:587.00px;top:969.66px;font-size:16.7px;color:#1e1f22;-webkit-text-stroke:0.28px;letter-spacing:0.052px;">Develop RESTful API for mobi...</div>
<div class="t" style="left:851.00px;top:969.76px;font-size:16.7px;color:#3b1f10;-webkit-text-stroke:0.28px;letter-spacing:0.180px;">On Hold</div>
<div class="t" style="left:1028.50px;top:969.76px;font-size:16.7px;color:#3b2a08;-webkit-text-stroke:0.28px;letter-spacing:0.188px;">Low</div>
<div class="t" style="left:378.70px;top:1041.36px;font-size:16.7px;color:#595a5c;-webkit-text-stroke:0.28px;letter-spacing:0.289px;">Duration</div>
<div class="t" style="left:378.70px;top:1104.66px;font-size:16.7px;color:#1e1f22;-webkit-text-stroke:0.28px;letter-spacing:0.340px;">Add new field to this table</div>
<div class="t" style="left:1307.50px;top:197.86px;font-size:16.7px;color:#595a5c;-webkit-text-stroke:0.28px;letter-spacing:0.116px;">Comments</div>
<div class="t" style="left:1497.50px;top:198.86px;font-size:14.1px;color:#1e1f22;-webkit-text-stroke:0.45px;letter-spacing:0.202px;">Summarize</div>
<div class="t" style="left:1323.00px;top:238.16px;font-size:14.1px;color:#595a5c;-webkit-text-stroke:0.28px;letter-spacing:0.488px;">is following this.</div>
<div class="t" style="left:1343.10px;top:310.46px;font-size:14.1px;color:#595a5c;font-weight:700;-webkit-text-stroke:0.15px;letter-spacing:-0.039px;">You</div>
<div class="t" style="left:1372.50px;top:310.46px;font-size:14.1px;color:#595a5c;-webkit-text-stroke:0.28px;letter-spacing:0.532px;">commented</div>
<div class="t" style="left:1588.75px;top:310.46px;font-size:14.1px;color:#595a5c;-webkit-text-stroke:0.28px;letter-spacing:0.432px;">30s ago</div>
<div class="t" style="left:1342.70px;top:335.06px;font-size:16.7px;color:#1e1f22;-webkit-text-stroke:0.28px;letter-spacing:0.353px;">If not possible, I'll pick this task!</div>
<div class="t" style="left:1372.20px;top:369.57px;font-size:14.8px;color:#2a67c9;-webkit-text-stroke:0.28px;letter-spacing:0.518px;">1</div>
<div class="t" style="left:1391.50px;top:443.16px;font-size:16.7px;color:#9b9b9b;-webkit-text-stroke:0.28px;letter-spacing:0.108px;">Add a reply</div>
<div class="t" style="left:1352.80px;top:1133.56px;font-size:16.7px;color:#8f8f8f;-webkit-text-stroke:0.28px;letter-spacing:0.110px;">Leave a comment</div>
<div class="t" style="left:1615.50px;top:1139.68px;font-size:15.5px;color:#7d7d7d;-webkit-text-stroke:0.28px;letter-spacing:0.543px;">@</div>
<div class="abs" style="left:614px;top:377.7px;width:840px;height:1074px;transform:scale(.25);transform-origin:0 0;overflow:hidden"><div class="pt" style="left:0;top:96px;width:840px;text-align:center;font-size:32.8px;font-weight:700;line-height:38px;color:#111;letter-spacing:.2px">NON-DISCLOSURE AGREEMENT</div>
<div class="pt" style="left:100px;top:152px;font-size:16.3px;font-weight:700;line-height:18px;text-decoration:underline;color:#111">PARTIES</div>
<div class="pt" style="left:104px;top:183px;font-size:16px;line-height:20.2px;color:#555">·</div>
<div class="pt" style="left:125px;top:183.0px;width:614px;font-size:15.6px;line-height:20.2px;color:#2a2a2a;white-space:nowrap;text-align:justify;text-align-last:justify">This Non-Disclosure Agreement (hereinafter referred to as the <b>"Agreement"</b>) is entered into</div>
<div class="pt" style="left:125px;top:203.2px;width:614px;font-size:15.6px;line-height:20.2px;color:#2a2a2a;white-space:nowrap;text-align:justify;text-align-last:justify">on ________________ (the <b>"Effective Date"</b>), by and between ________________________,</div>
<div class="pt" style="left:125px;top:223.4px;width:614px;font-size:15.6px;line-height:20.2px;color:#2a2a2a;white-space:nowrap;text-align:justify;text-align-last:justify">with an address of ________________, (hereinafter referred to as the <b>"Disclosing Party"</b>) and</div>
<div class="pt" style="left:125px;top:243.6px;width:614px;font-size:15.6px;line-height:20.2px;color:#2a2a2a;white-space:nowrap;text-align:justify;text-align-last:justify">________________, with an address of ________________, (hereinafter referred to as the</div>
<div class="pt" style="left:125px;top:263.8px;width:614px;font-size:15.6px;line-height:20.2px;color:#2a2a2a;white-space:nowrap;text-align:left"><b>"Receiving Party"</b>) (collectively referred to as the <b>"Parties"</b>).</div>
<div class="pt" style="left:100px;top:300px;font-size:16.3px;font-weight:700;line-height:18px;text-decoration:underline;color:#111">CONFIDENTIAL INFORMATION</div>
<div class="pt" style="left:104px;top:331px;font-size:16px;line-height:20.2px;color:#555">·</div>
<div class="pt" style="left:125px;top:331.0px;width:614px;font-size:15.6px;line-height:20.2px;color:#2a2a2a;white-space:nowrap;text-align:justify;text-align-last:justify">The Receiving Party agrees not to disclose, copy, clone, or modify any confidential</div>
<div class="pt" style="left:125px;top:351.2px;width:614px;font-size:15.6px;line-height:20.2px;color:#2a2a2a;white-space:nowrap;text-align:justify;text-align-last:justify">information related to the Disclosing Party and agrees not to use any such information without</div>
<div class="pt" style="left:125px;top:371.4px;width:614px;font-size:15.6px;line-height:20.2px;color:#2a2a2a;white-space:nowrap;text-align:left">obtaining consent.</div>
<div class="pt" style="left:104px;top:406px;font-size:16px;line-height:20.2px;color:#555">·</div>
<div class="pt" style="left:125px;top:406.0px;width:614px;font-size:15.6px;line-height:20.2px;color:#2a2a2a;white-space:nowrap;text-align:justify;text-align-last:justify">"Confidential information" refers to any data and/or information that is related to the</div>
<div class="pt" style="left:125px;top:426.2px;width:614px;font-size:15.6px;line-height:20.2px;color:#2a2a2a;white-space:nowrap;text-align:justify;text-align-last:justify">Disclosing Party, in any form, including, but not limited to, oral or written. Such confidential</div>
<div class="pt" style="left:125px;top:446.4px;width:614px;font-size:15.6px;line-height:20.2px;color:#2a2a2a;white-space:nowrap;text-align:justify;text-align-last:justify">information includes, but is not limited to, any information related to the business or industry</div>
<div class="pt" style="left:125px;top:466.6px;width:614px;font-size:15.6px;line-height:20.2px;color:#2a2a2a;white-space:nowrap;text-align:justify;text-align-last:justify">of the Disclosing Party, such as discoveries, processes, techniques, programs, knowledge</div>
<div class="pt" style="left:125px;top:486.8px;width:614px;font-size:15.6px;line-height:20.2px;color:#2a2a2a;white-space:nowrap;text-align:justify;text-align-last:justify">bases, customer lists, potential customers, business partners, affiliated partners, leads, know-</div>
<div class="pt" style="left:125px;top:507.0px;width:614px;font-size:15.6px;line-height:20.2px;color:#2a2a2a;white-space:nowrap;text-align:left">how, or any other services related to the Disclosing Party.</div>
<div class="pt" style="left:100px;top:541px;font-size:16.3px;font-weight:700;line-height:18px;text-decoration:underline;color:#111">RETURN OF CONFIDENTIAL INFORMATION</div>
<div class="pt" style="left:104px;top:575px;font-size:16px;line-height:20.2px;color:#555">·</div>
<div class="pt" style="left:125px;top:575.0px;width:614px;font-size:15.6px;line-height:20.2px;color:#2a2a2a;white-space:nowrap;text-align:justify;text-align-last:justify">The Receiving Party agrees to return all the confidential information to the Disclosing Party</div>
<div class="pt" style="left:125px;top:595.2px;width:614px;font-size:15.6px;line-height:20.2px;color:#2a2a2a;white-space:nowrap;text-align:left">upon the termination of this Agreement.</div>
<div class="pt" style="left:100px;top:630px;font-size:16.3px;font-weight:700;line-height:18px;text-decoration:underline;color:#111">OWNERSHIP</div>
<div class="pt" style="left:104px;top:663px;font-size:16px;line-height:20.2px;color:#555">·</div>
<div class="pt" style="left:125px;top:663.0px;width:614px;font-size:15.6px;line-height:20.2px;color:#2a2a2a;white-space:nowrap;text-align:justify;text-align-last:justify">This Agreement is not transferable and may only be transferred by written consent provided</div>
<div class="pt" style="left:125px;top:683.2px;width:614px;font-size:15.6px;line-height:20.2px;color:#2a2a2a;white-space:nowrap;text-align:left">by both Parties.</div>
<div class="pt" style="left:100px;top:720px;font-size:16.3px;font-weight:700;line-height:18px;text-decoration:underline;color:#111">GOVERNING LAW</div>
<div class="pt" style="left:104px;top:751px;font-size:16px;line-height:20.2px;color:#555">·</div>
<div class="pt" style="left:125px;top:751.0px;width:614px;font-size:15.6px;line-height:20.2px;color:#2a2a2a;white-space:nowrap;text-align:justify;text-align-last:justify">This Agreement shall be governed by and construed in accordance with the laws of</div>
<div class="pt" style="left:125px;top:771.2px;width:614px;font-size:15.6px;line-height:20.2px;color:#2a2a2a;white-space:nowrap;text-align:left"><span style="color:#999">________________.</span></div>
<div class="pt" style="left:100px;top:807px;font-size:16.3px;font-weight:700;line-height:18px;text-decoration:underline;color:#111">SIGNATURE AND DATE</div>
<div class="pt" style="left:104px;top:839px;font-size:16px;line-height:20.2px;color:#555">·</div>
<div class="pt" style="left:125px;top:839.0px;width:614px;font-size:15.6px;line-height:20.2px;color:#2a2a2a;white-space:nowrap;text-align:justify;text-align-last:justify">The Parties hereby agree to the terms and conditions set forth in this Agreement and such is</div>
<div class="pt" style="left:125px;top:859.2px;width:614px;font-size:15.6px;line-height:20.2px;color:#2a2a2a;white-space:nowrap;text-align:left">demonstrated by their signatures below:</div></div>
<svg class="abs" style="left:1350.2px;top:366.2px" width="19" height="19" viewBox="0 0 19 19"><title>smiling face with hearts</title><defs><radialGradient id="fg" cx="50%" cy="35%" r="75%"><stop offset="0" stop-color="#ffe36b"/><stop offset="1" stop-color="#f7a62b"/></radialGradient></defs><circle cx="9.3" cy="9.8" r="7.5" fill="url(#fg)"/><ellipse cx="5.6" cy="11.3" rx="1.7" ry="1.1" fill="#f4845f" opacity=".75"/><ellipse cx="13" cy="11.3" rx="1.7" ry="1.1" fill="#f4845f" opacity=".75"/><path d="M5.2 8.6Q6.4 7.4 7.6 8.6M11 8.6Q12.2 7.4 13.4 8.6" stroke="#7a4a12" stroke-width=".9" fill="none" stroke-linecap="round"/><path d="M7.2 12.2Q9.3 14.4 11.4 12.2" stroke="#7a4a12" stroke-width=".9" fill="none" stroke-linecap="round"/><path id="hrt" d="M0 1.1C-1.6 -0.2 -2.2 -1.2 -1.6 -2C-1 -2.7 -0.2 -2.3 0 -1.7C0.2 -2.3 1 -2.7 1.6 -2C2.2 -1.2 1.6 -0.2 0 1.1Z" fill="#e8323c" transform="translate(16 4.6) rotate(20) scale(1.3)"/><path d="M0 1.1C-1.6 -0.2 -2.2 -1.2 -1.6 -2C-1 -2.7 -0.2 -2.3 0 -1.7C0.2 -2.3 1 -2.7 1.6 -2C2.2 -1.2 1.6 -0.2 0 1.1Z" fill="#e8323c" transform="translate(3.2 14.3) rotate(-20) scale(1.3)"/><path d="M0 1.1C-1.6 -0.2 -2.2 -1.2 -1.6 -2C-1 -2.7 -0.2 -2.3 0 -1.7C0.2 -2.3 1 -2.7 1.6 -2C2.2 -1.2 1.6 -0.2 0 1.1Z" fill="#e8323c" transform="translate(14.6 16) rotate(15) scale(1.3)"/></svg>
</div>
</body>
</html>
